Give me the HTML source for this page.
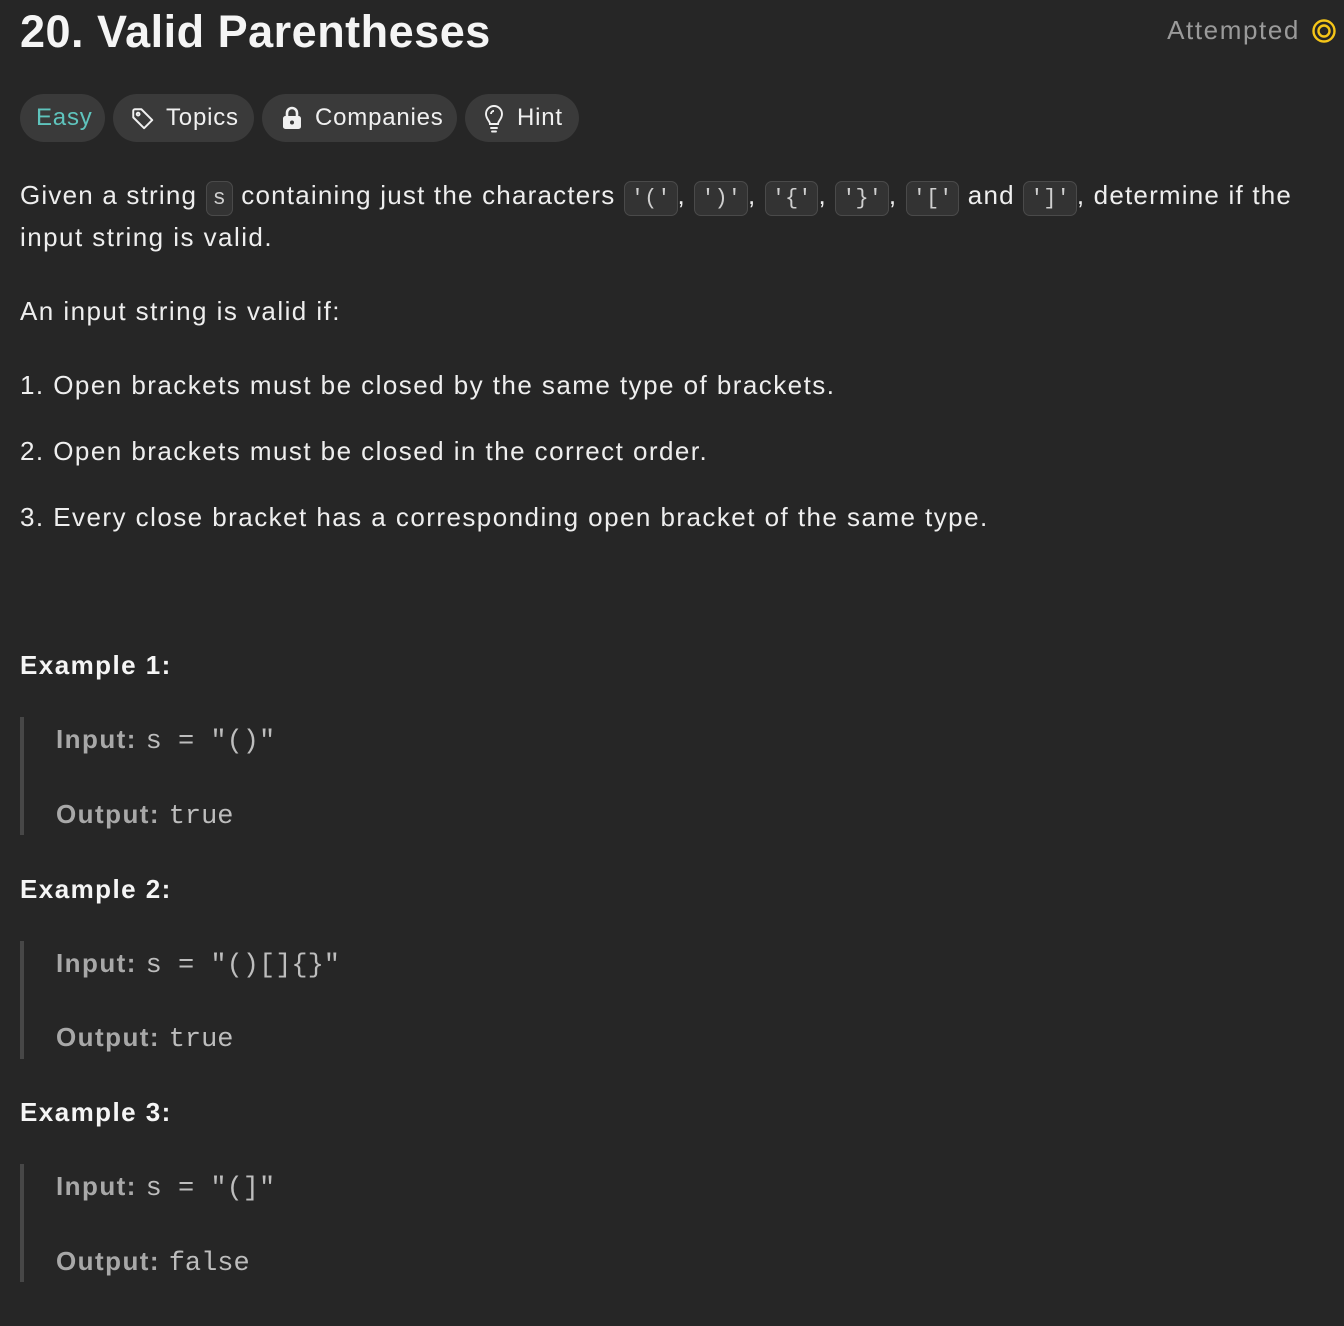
<!DOCTYPE html>
<html><head><meta charset="utf-8"><style>
html,body{margin:0;padding:0;background:#262626;width:1344px;height:1326px;overflow:hidden}
body{font-family:"Liberation Sans",Arial,sans-serif;color:#eeeeee;position:relative}
.a{position:absolute;white-space:nowrap;line-height:42px;font-size:26px;letter-spacing:1.45px}
.t{left:20px;top:4px;font-size:45px;font-weight:bold;line-height:56px;color:#f5f5f5;letter-spacing:0.5px}
.att{right:44px;top:10px;font-size:26px;color:#9a9a9a;line-height:40px;letter-spacing:1.6px}
.pill{position:absolute;top:94px;height:48px;border-radius:24px;background:#3a3a3a;font-size:24px;line-height:48px;color:#f0f0f0;box-sizing:border-box;letter-spacing:0.8px}
code{font-family:"Liberation Mono",monospace;font-size:22px;color:#cfcfcf;background:#333;border:1.5px solid #4a4a4a;border-radius:7px;padding:4px 6px;letter-spacing:0}
.m{font-family:"Liberation Mono",monospace;font-size:27px;color:#bdbdbd;font-weight:normal;letter-spacing:0}
.lb{color:#a8a8a8;font-weight:bold}
.h{font-weight:bold;color:#f5f5f5}
.bar{position:absolute;left:20px;width:4px;background:#474747}
</style></head><body>
<div class="a t">20. Valid Parentheses</div>
<div class="a att">Attempted</div>
<svg style="position:absolute;left:1311px;top:18px" width="26" height="26" viewBox="0 0 26 26"><circle cx="13" cy="13" r="10.5" fill="none" stroke="#f5c518" stroke-width="2.4"/><circle cx="13" cy="13" r="5.5" fill="none" stroke="#f5c518" stroke-width="2.4"/></svg>

<div class="pill" style="left:20px;width:85px;color:#5fc4bd;padding-left:16px">Easy</div>
<div class="pill" style="left:113px;width:141px;padding-left:53px">Topics</div>
<svg style="position:absolute;left:130px;top:106px" width="26" height="26" viewBox="0 0 24 24" fill="none" stroke="#f0f0f0" stroke-width="1.8" stroke-linejoin="round"><path d="M3 4.5v6l10 10 7.5-7.5-10-10H4.5A1.5 1.5 0 0 0 3 4.5z"/><circle cx="7.5" cy="7.5" r="1.3"/></svg>
<div class="pill" style="left:262px;width:195px;padding-left:53px">Companies</div>
<svg style="position:absolute;left:280px;top:105px" width="24" height="26" viewBox="0 0 24 26"><path d="M7 11V8a5 5 0 0 1 10 0v3" fill="none" stroke="#f0f0f0" stroke-width="2.6"/><rect x="3" y="11" width="18" height="13" rx="2.5" fill="#f0f0f0"/><circle cx="12" cy="17.5" r="2" fill="#3a3a3a"/></svg>
<div class="pill" style="left:465px;width:114px;padding-left:52px">Hint</div>
<svg style="position:absolute;left:482px;top:104px" width="24" height="30" viewBox="0 0 24 30" fill="none" stroke="#f0f0f0" stroke-width="1.9"><path d="M8 20c0-3-4-5-4-10a8 8 0 0 1 16 0c0 5-4 7-4 10z"/><path d="M9 24h6M10 27.5h4" stroke-linecap="round"/><path d="M12 7a3 3 0 0 0-3 3"/></svg>

<div class="a" style="left:20px;top:174px;letter-spacing:1.2px">Given a string <code>s</code> containing just the characters <code>'('</code>, <code>')'</code>, <code>'{'</code>, <code>'}'</code>, <code>'['</code> and <code>']'</code>, determine if the</div>
<div class="a" style="left:20px;top:216px">input string is valid.</div>
<div class="a" style="left:20px;top:290px">An input string is valid if:</div>
<div class="a" style="left:20px;top:364px">1. Open brackets must be closed by the same type of brackets.</div>
<div class="a" style="left:20px;top:430px">2. Open brackets must be closed in the correct order.</div>
<div class="a" style="left:20px;top:496px">3. Every close bracket has a corresponding open bracket of the same type.</div>

<div class="a h" style="left:20px;top:644px">Example 1:</div>
<div class="bar" style="top:717px;height:118px"></div>
<div class="a" style="left:56px;top:718px"><span class="lb">Input:</span> <span class="m">s = "()"</span></div>
<div class="a" style="left:56px;top:793px"><span class="lb">Output:</span> <span class="m">true</span></div>

<div class="a h" style="left:20px;top:868px">Example 2:</div>
<div class="bar" style="top:941px;height:118px"></div>
<div class="a" style="left:56px;top:942px"><span class="lb">Input:</span> <span class="m">s = "()[]{}"</span></div>
<div class="a" style="left:56px;top:1016px"><span class="lb">Output:</span> <span class="m">true</span></div>

<div class="a h" style="left:20px;top:1091px">Example 3:</div>
<div class="bar" style="top:1164px;height:118px"></div>
<div class="a" style="left:56px;top:1165px"><span class="lb">Input:</span> <span class="m">s = "(]"</span></div>
<div class="a" style="left:56px;top:1240px"><span class="lb">Output:</span> <span class="m">false</span></div>
</body></html>
